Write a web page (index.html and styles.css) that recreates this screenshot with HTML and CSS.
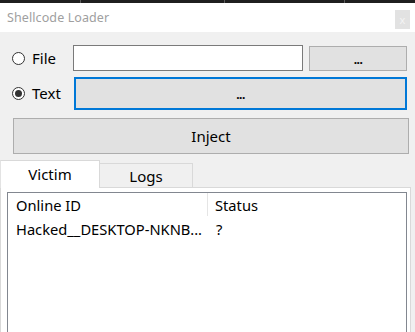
FILE: index.html
```html
<!DOCTYPE html>
<html>
<head>
<meta charset="utf-8">
<link rel="stylesheet" href="styles.css">
</head>
<body>
<div class="window">
  <div class="topbar">
    <span class="seg seg1"></span>
    <span class="seg seg2"></span>
    <span class="seg seg3"></span>
    <span class="seg seg4"></span>
  </div>
  <div class="titlebar">
    <span class="title">Shellcode Loader</span>
    <span class="close">x</span>
  </div>
  <div class="content">
    <div class="row row1">
      <label class="radio"><span class="circle"></span><span class="rlabel">File</span></label>
      <div class="input"></div>
      <div class="btn btn-small"><span class="dots">...</span></div>
    </div>
    <div class="row row2">
      <label class="radio"><span class="circle checked"></span><span class="rlabel">Text</span></label>
      <div class="btn btn-big"><span class="dots">...</span></div>
    </div>
    <div class="btn inject">Inject</div>
    <div class="tabs">
      <div class="tab active">Victim</div>
      <div class="tab">Logs</div>
    </div>
    <div class="panel">
      <div class="listview">
        <div class="lv-row lv-head">
          <div class="cell c1">Online ID</div>
          <div class="cell c2">Status</div>
        </div>
        <div class="lv-row lv-item">
          <div class="cell c1">Hacked__DESKTOP-NKNB...</div>
          <div class="cell c2">?</div>
        </div>
      </div>
    </div>
  </div>
</div>
</body>
</html>
```

FILE: styles.css
```css
* { box-sizing: border-box; }
html, body { margin: 0; padding: 0; }
body {
  width: 415px;
  height: 332px;
  overflow: hidden;
  font-family: "Noto Sans", "Open Sans", sans-serif;
  background: #f0f0f0;
  color: #000;
}
.window { width: 415px; height: 332px; display: flex; flex-direction: column; overflow: hidden; }

.topbar { height: 3px; flex-shrink: 0; background: #1f1f1f; display: flex; }
.seg { height: 3px; border-right: 1px solid #5a5a5a; }
.seg1 { width: 81px; }
.seg2 { width: 144px; }
.seg3 { width: 120px; }
.seg4 { flex: 1; border-right: none; }

.titlebar {
  height: 29px;
  flex-shrink: 0;
  background: #fff;
  display: flex;
  align-items: center;
  justify-content: space-between;
  padding-left: 7px;
  padding-right: 5px;
}
.title { font-size: 12.5px; color: #a0a0a0; letter-spacing: 0.1px; margin-top: -1px; }
.close {
  width: 15px; height: 19px;
  background: #e2e2e2;
  color: #f4f4f4;
  font-size: 11px;
  display: flex; align-items: center; justify-content: center;
  margin-top: 4px;
}

.content { flex: 1; min-height: 0; display: flex; flex-direction: column; padding-top: 13px; }

.row { display: flex; align-items: center; flex-shrink: 0; }
.row1 { height: 26px; }
.row2 { height: 33px; margin-top: 6px; }

.radio { width: 73px; display: flex; align-items: center; padding-left: 12px; }
.circle {
  width: 13px; height: 13px;
  border: 1px solid #333;
  border-radius: 50%;
  background: #fff;
  display: flex; align-items: center; justify-content: center;
}
.circle.checked::after {
  content: "";
  width: 7px; height: 7px; border-radius: 50%; background: #333;
}
.rlabel { font-size: 15px; margin-left: 7px; line-height: 1; }

.input {
  width: 230px; height: 26px;
  background: #fff;
  border: 1px solid #7a7a7a;
}
.btn {
  background: #e1e1e1;
  border: 1px solid #adadad;
  display: flex; align-items: center; justify-content: center;
  flex-shrink: 0;
}
.btn-small { width: 98px; height: 25px; margin-left: 6px; margin-top: 1px; }
.btn-big { width: 333px; height: 33px; margin-left: 1px; border: 2px solid #0078d7; }
.dots { font-size: 12px; font-weight: bold; line-height: 1; margin-top: 2px; letter-spacing: -0.5px; }
.btn-big .dots { margin-top: 3px; }

.inject {
  margin: 8px 0 0 13px;
  width: 396px; height: 36px;
  font-size: 15px;
}

.tabs { display: flex; align-items: flex-end; height: 26px; margin-top: 7px; flex-shrink: 0; }
.tab {
  height: 24px;
  width: 93px;
  border: 1px solid #d9d9d9;
  border-bottom: none;
  background: #f0f0f0;
  font-size: 15px;
  display: flex; align-items: center; justify-content: center;
}
.tab.active {
  width: 100px;
  height: 28px;
  margin-bottom: -1px;
  background: #fff;
  position: relative;
  z-index: 1;
  padding-bottom: 2px;
  border-left-color: #e3e3e3;
}
.tab + .tab { border-left: none; }

.panel {
  flex: 1;
  min-height: 0;
  width: 411px;
  background: #fff;
  border: 1px solid #d9d9d9;
  border-bottom: none;
  padding: 4px 3px 0 6px;
  display: flex;
  flex-direction: column;
}
.listview {
  flex: 1;
  width: 400px;
  border: 1px solid #828790;
  border-bottom: none;
  background: #fff;
}
.lv-row { display: flex; font-size: 14.7px; }
.lv-head { height: 24px; padding-bottom: 1px; }
.lv-item { height: 24px; padding-bottom: 1px; }
.cell { display: flex; align-items: center; white-space: nowrap; overflow: hidden; }
.c1 { width: 200px; padding-left: 8px; }
.c2 { flex: 1; padding-left: 7px; }
.lv-head .c1 { border-right: 1px solid #e5e5e5; }
.lv-item .c2 { padding-left: 8px; }
```
